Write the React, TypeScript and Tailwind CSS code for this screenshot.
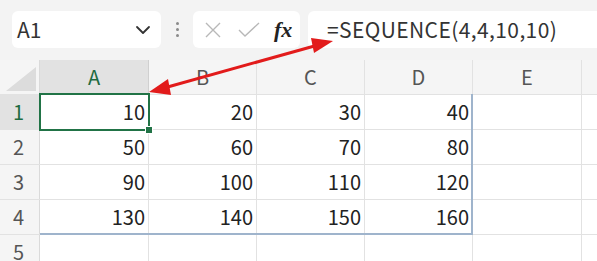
import React from "react";

const COLS = ["A", "B", "C", "D", "E"];
const COL_W = [109, 108, 108, 108, 109];

const DATA = [
  [10, 20, 30, 40],
  [50, 60, 70, 80],
  [90, 100, 110, 120],
  [130, 140, 150, 160],
];

const font = { fontFamily: '"Noto Sans CJK JP", "Noto Sans", sans-serif' };

function FormulaBar() {
  return (
    <div className="flex h-[60px] items-center bg-[#f3f3f3] pl-[12px] pb-[1px]">
      {/* name box */}
      <div className="flex h-[37px] w-[149px] items-center justify-between rounded-md bg-white pl-[5px] pr-[10px]">
        <span className="text-[21px] text-[#333]">A1</span>
        <svg width="16" height="10" viewBox="0 0 16 10" fill="none">
          <path d="M2 2l6 6 6-6" stroke="#333" strokeWidth="1.8" strokeLinecap="round" strokeLinejoin="round" />
        </svg>
      </div>
      {/* drag handle */}
      <div className="flex w-[32px] flex-col items-center gap-[3px]">
        <span className="h-[3px] w-[3px] rounded-full bg-[#8a8a8a]" />
        <span className="h-[3px] w-[3px] rounded-full bg-[#8a8a8a]" />
        <span className="h-[3px] w-[3px] rounded-full bg-[#8a8a8a]" />
      </div>
      {/* cancel / enter / fx */}
      <div className="flex h-[37px] w-[107px] items-center rounded-md bg-white pl-[11px]">
        <svg width="18" height="18" viewBox="0 0 18 18" fill="none">
          <path d="M2 2l14 14M16 2L2 16" stroke="#b8b8b8" strokeWidth="1.4" />
        </svg>
        <svg className="ml-[16px]" width="22" height="16" viewBox="0 0 22 16" fill="none">
          <path d="M1 8l6 6L21 1" stroke="#b8b8b8" strokeWidth="1.4" />
        </svg>
        <span
          className="ml-[14px] text-[22px] font-bold italic leading-none text-[#222]"
          style={{ fontFamily: '"Liberation Serif", "DejaVu Serif", serif' }}
        >
          fx
        </span>
      </div>
      {/* formula input */}
      <div className="ml-[8px] flex h-[37px] flex-1 items-center rounded-l-md bg-white pl-[19px]">
        <span className="text-[21px] tracking-[0.4px] text-[#333]">=SEQUENCE(4,4,10,10)</span>
      </div>
    </div>
  );
}

function Sheet() {
  return (
    <div className="relative">
      {/* column headers */}
      <div className="flex h-[34px] bg-[#f5f5f5]">
        <div className="relative w-[40px] border-r border-[#dadada]">
          <svg className="absolute bottom-[3px] right-[3px]" width="30" height="24" viewBox="0 0 30 24">
            <path d="M30 0V24H0Z" fill="#dcdcdc" />
          </svg>
        </div>
        {COLS.map((c, i) => (
          <div
            key={c}
            style={{ width: COL_W[i] }}
            className={
              i === 0
                ? "flex items-center justify-center border-r border-[#d0d0d0] bg-[#e2e2e2] text-[20px] text-[#1e6b41]"
                : "flex items-center justify-center border-r border-[#e2e2e2] text-[20px] text-[#555]"
            }
          >
            {c}
          </div>
        ))}
        <div className="flex-1" />
      </div>
      {/* rows */}
      {[1, 2, 3, 4, 5].map((r) => (
        <div key={r} className="flex h-[35px] border-t border-[#e2e2e2]">
          <div
            className={
              r === 1
                ? "flex w-[40px] items-center pl-[13px] border-r border-[#d0d0d0] bg-[#e2e2e2] text-[20px] text-[#1e6b41]"
                : "flex w-[40px] items-center pl-[13px] border-r border-[#dadada] bg-[#f5f5f5] text-[20px] text-[#555]"
            }
          >
            {r}
          </div>
          {COL_W.map((w, ci) => (
            <div
              key={ci}
              style={{ width: w }}
              className="flex items-center justify-end border-r border-[#e2e2e2] pr-[3px] text-[20px] text-[#222]"
            >
              {r <= 4 && ci < 4 ? DATA[r - 1][ci] : ""}
            </div>
          ))}
          <div className="flex-1" />
        </div>
      ))}
      {/* selected range A1:D4 */}
      <div className="pointer-events-none absolute left-[40px] top-[34px] h-[141px] w-[433px] border-r-2 border-b-2 border-[#9fb4cc]" />
      {/* active cell A1 */}
      <div className="pointer-events-none absolute left-[39px] top-[33px] h-[38px] w-[111px] border-2 border-[#217346]" />
      <div className="pointer-events-none absolute left-[146px] top-[67px] h-[6px] w-[6px] bg-[#217346] outline outline-1 outline-white" />
    </div>
  );
}

export default function App() {
  return (
    <div className="relative h-[261px] w-[597px] overflow-hidden bg-white" style={font}>
      <FormulaBar />
      <Sheet />
      {/* red double-headed arrow */}
      <svg className="pointer-events-none absolute left-0 top-0" width="597" height="261" viewBox="0 0 597 261">
        <line x1="164" y1="88" x2="318" y2="45" stroke="#e21b1b" strokeWidth="3" />
        <path d="M149 92L168 79L171 95Z" fill="#e21b1b" />
        <path d="M333 41L314 53L311 38Z" fill="#e21b1b" />
      </svg>
    </div>
  );
}
